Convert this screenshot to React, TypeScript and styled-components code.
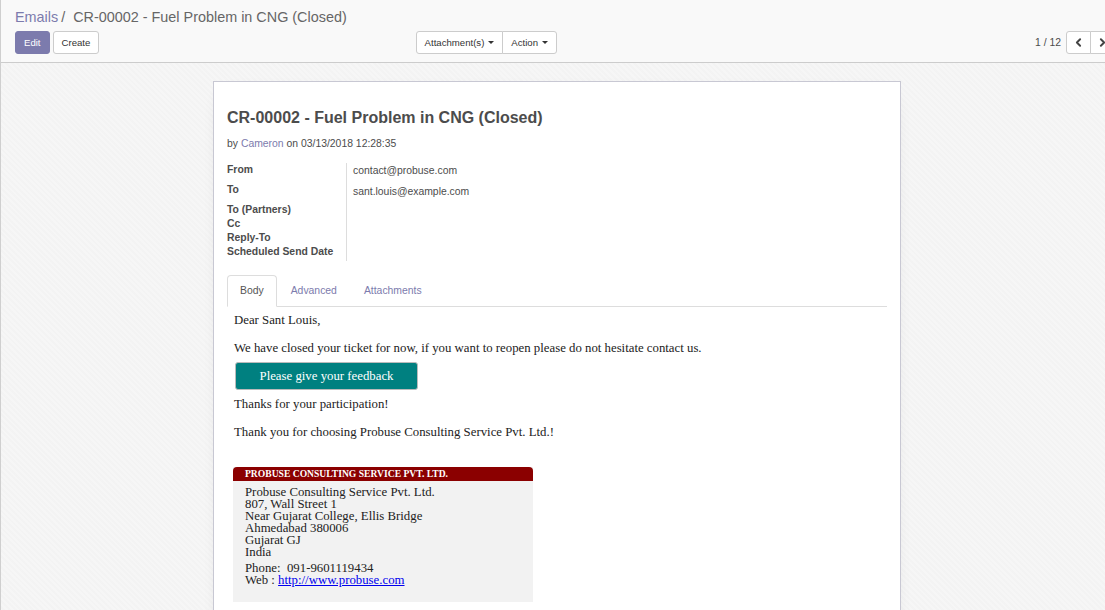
import styled, { createGlobalStyle } from 'styled-components';
import { ChevronLeft, ChevronRight } from 'lucide-react';

const GlobalStyle = createGlobalStyle`
  html, body {
    margin: 0;
    padding: 0;
    overflow: hidden;
    background: #f6f6f6;
  }
  body {
    font-family: "Liberation Sans", Arial, sans-serif;
    font-size: 10.4px;
    color: #4c4c4c;
  }
`;

const Page = styled.div`
  min-height: 610px;
  border-left: 1px solid #cfcfcf;
  background-color: #f6f6f6;
  background-image: repeating-linear-gradient(45deg, rgba(0, 0, 0, 0.012) 0 2px, transparent 2px 4px);
`;

const ControlPanel = styled.div`
  background: #f9f9f9;
  border-bottom: 1px solid #cccccc;
  padding: 7px 0 8px 14px;
  height: 47px;
`;

const Breadcrumb = styled.div`
  font-size: 14.4px;
  line-height: 18px;
  padding-top: 1px;
  color: #666666;
  white-space: nowrap;
`;

const Crumb = styled.span`
  color: #7c7bad;
`;

const Separator = styled.span`
  padding: 0 8px 0 3px;
`;

const PanelRow = styled.div`
  display: grid;
  grid-template-columns: 542px 1fr;
  align-items: center;
  margin-top: 5px;
`;

const LeftHalf = styled.div`
  display: flex;
  justify-content: space-between;
  align-items: center;
`;

const ButtonGroup = styled.div`
  display: flex;
  align-items: center;
  gap: 3px;
`;

const Joined = styled.div`
  display: flex;
  & > button + button {
    margin-left: -1px;
  }
`;

const Btn = styled.button<{ $primary?: boolean }>`
  font-family: "Liberation Sans", Arial, sans-serif;
  font-size: 9.6px;
  height: 23px;
  padding: 0 8px;
  border-radius: 3px;
  border: 1px solid ${({ $primary }) => ($primary ? '#7c7bad' : '#cccccc')};
  background: ${({ $primary }) => ($primary ? '#7c7bad' : '#ffffff')};
  color: ${({ $primary }) => ($primary ? '#ffffff' : '#333333')};
  display: inline-flex;
  align-items: center;
  gap: 4px;
  cursor: pointer;
`;

const GroupBtn = styled(Btn)`
  border-radius: 0;
  &:first-child {
    border-radius: 3px 0 0 3px;
  }
  &:last-child {
    border-radius: 0 3px 3px 0;
  }
`;

const Caret = styled.span`
  width: 0;
  height: 0;
  border-left: 3px solid transparent;
  border-right: 3px solid transparent;
  border-top: 3px solid #333333;
`;

const Pager = styled.div`
  justify-self: end;
  display: flex;
  align-items: center;
  gap: 5px;
  margin-right: -10px;
`;

const PagerValue = styled.span`
  font-size: 10.4px;
  color: #4c4c4c;
`;

const PagerBtn = styled(GroupBtn)`
  width: 25px;
  padding: 0;
  justify-content: center;
  color: #444;
`;

const Content = styled.div`
  padding: 18px 0 0 8px;
  display: flex;
  justify-content: center;
`;

const Sheet = styled.div`
  width: 660px;
  min-height: 560px;
  background: #ffffff;
  border: 1px solid #c8c8d3;
  box-shadow: 0 5px 20px -15px rgba(0, 0, 0, 0.3);
  padding: 16px 13px 0 13px;
`;

const Title = styled.h1`
  margin: 10px 0 0;
  font-size: 16px;
  line-height: 20px;
  font-weight: bold;
  color: #4c4c4c;
`;

const Meta = styled.div`
  margin-top: 9px;
  font-size: 10.4px;
  line-height: 14px;
  color: #4c4c4c;
`;

const Author = styled.span`
  color: #7c7bad;
`;

const Fields = styled.div`
  margin-top: 12px;
  display: grid;
  grid-template-columns: 120px 1fr;
`;

const Labels = styled.div`
  border-right: 1px solid #dddddd;
  padding-bottom: 2px;
`;

const Label = styled.div<{ $tall?: boolean }>`
  font-weight: bold;
  font-size: 10.4px;
  line-height: 14px;
  height: ${({ $tall }) => ($tall ? '20px' : '14px')};
  white-space: nowrap;
`;

const Values = styled.div`
  padding-left: 6px;
`;

const Value = styled.div`
  font-size: 10.4px;
  line-height: 14px;
  height: 20px;
  padding-top: 1px;
`;

const Tabs = styled.div`
  margin-top: 14px;
  display: flex;
  border-bottom: 1px solid #dddddd;
  height: 31px;
`;

const Tab = styled.div<{ $active?: boolean }>`
  font-size: 10.4px;
  padding: 0 12px;
  line-height: 30px;
  margin-bottom: -1px;
  margin-right: 1px;
  border: 1px solid ${({ $active }) => ($active ? '#dddddd' : 'transparent')};
  border-bottom-color: ${({ $active }) => ($active ? '#ffffff' : 'transparent')};
  border-radius: 4px 4px 0 0;
  background: ${({ $active }) => ($active ? '#ffffff' : 'transparent')};
  color: ${({ $active }) => ($active ? '#555555' : '#7c7bad')};
`;

const MailBody = styled.div`
  padding: 6px 7px 0;
  font-family: "Liberation Serif", "Times New Roman", serif;
  font-size: 12.8px;
  color: #222222;
`;

const Para = styled.p`
  margin: 0 0 13px;
  line-height: 15px;
`;

const Feedback = styled.a`
  display: flex;
  align-items: center;
  justify-content: center;
  width: 183px;
  height: 28px;
  margin: -7px 0 7px 1px;
  box-sizing: border-box;
  background: #008080;
  color: #ffffff;
  border: 1px solid #bbbbbb;
  border-radius: 3px;
  text-decoration: none;
  font-size: 12.8px;
`;

const Signature = styled.div`
  width: 300px;
  margin-top: 27px;
  margin-left: -1px;
  background: #f2f2f2;
`;

const SignatureHead = styled.div`
  background: #8b0000;
  color: #ffffff;
  font-weight: bold;
  font-size: 9.6px;
  line-height: 14px;
  height: 14px;
  padding-left: 12px;
  border-radius: 4px 4px 0 0;
  text-transform: uppercase;
`;

const SignatureBody = styled.div`
  padding: 5px 12px 16px;
  line-height: 12px;
  color: #222222;
`;

const Contact = styled.div`
  margin-top: 4px;
`;

const Link = styled.a`
  color: #0000ee;
  text-decoration: underline;
`;

export default function App() {
  return (
    <Page>
      <GlobalStyle />
      <ControlPanel>
        <Breadcrumb>
          <Crumb>Emails</Crumb>
          <Separator>/</Separator>CR-00002 - Fuel Problem in CNG (Closed)
        </Breadcrumb>
        <PanelRow>
          <LeftHalf>
            <ButtonGroup>
              <Btn $primary>Edit</Btn>
              <Btn>Create</Btn>
            </ButtonGroup>
            <Joined>
              <GroupBtn>
                Attachment(s) <Caret />
              </GroupBtn>
              <GroupBtn>
                Action <Caret />
              </GroupBtn>
            </Joined>
          </LeftHalf>
          <Pager>
            <PagerValue>1 / 12</PagerValue>
            <Joined>
              <PagerBtn>
                <ChevronLeft size={13} strokeWidth={3.5} />
              </PagerBtn>
              <PagerBtn>
                <ChevronRight size={13} strokeWidth={3.5} />
              </PagerBtn>
            </Joined>
          </Pager>
        </PanelRow>
      </ControlPanel>

      <Content>
        <Sheet>
          <Title>CR-00002 - Fuel Problem in CNG (Closed)</Title>
          <Meta>
            by <Author>Cameron</Author> on 03/13/2018 12:28:35
          </Meta>
          <Fields>
            <Labels>
              <Label $tall>From</Label>
              <Label $tall>To</Label>
              <Label>To (Partners)</Label>
              <Label>Cc</Label>
              <Label>Reply-To</Label>
              <Label>Scheduled Send Date</Label>
            </Labels>
            <Values>
              <Value>contact@probuse.com</Value>
              <Value>sant.louis@example.com</Value>
            </Values>
          </Fields>
          <Tabs>
            <Tab $active>Body</Tab>
            <Tab>Advanced</Tab>
            <Tab>Attachments</Tab>
          </Tabs>
          <MailBody>
            <Para>Dear Sant Louis,</Para>
            <Para>We have closed your ticket for now, if you want to reopen please do not hesitate contact us.</Para>
            <Feedback href="#">Please give your feedback</Feedback>
            <Para>Thanks for your participation!</Para>
            <Para>Thank you for choosing Probuse Consulting Service Pvt. Ltd.!</Para>
            <Signature>
              <SignatureHead>Probuse Consulting Service Pvt. Ltd.</SignatureHead>
              <SignatureBody>
                Probuse Consulting Service Pvt. Ltd.
                <br />
                807, Wall Street 1
                <br />
                Near Gujarat College, Ellis Bridge
                <br />
                Ahmedabad 380006
                <br />
                Gujarat GJ
                <br />
                India
                <Contact>
                  Phone:&nbsp; 091-9601119434
                  <br />
                  Web : <Link href="#">http://www.probuse.com</Link>
                </Contact>
              </SignatureBody>
            </Signature>
          </MailBody>
        </Sheet>
      </Content>
    </Page>
  );
}
